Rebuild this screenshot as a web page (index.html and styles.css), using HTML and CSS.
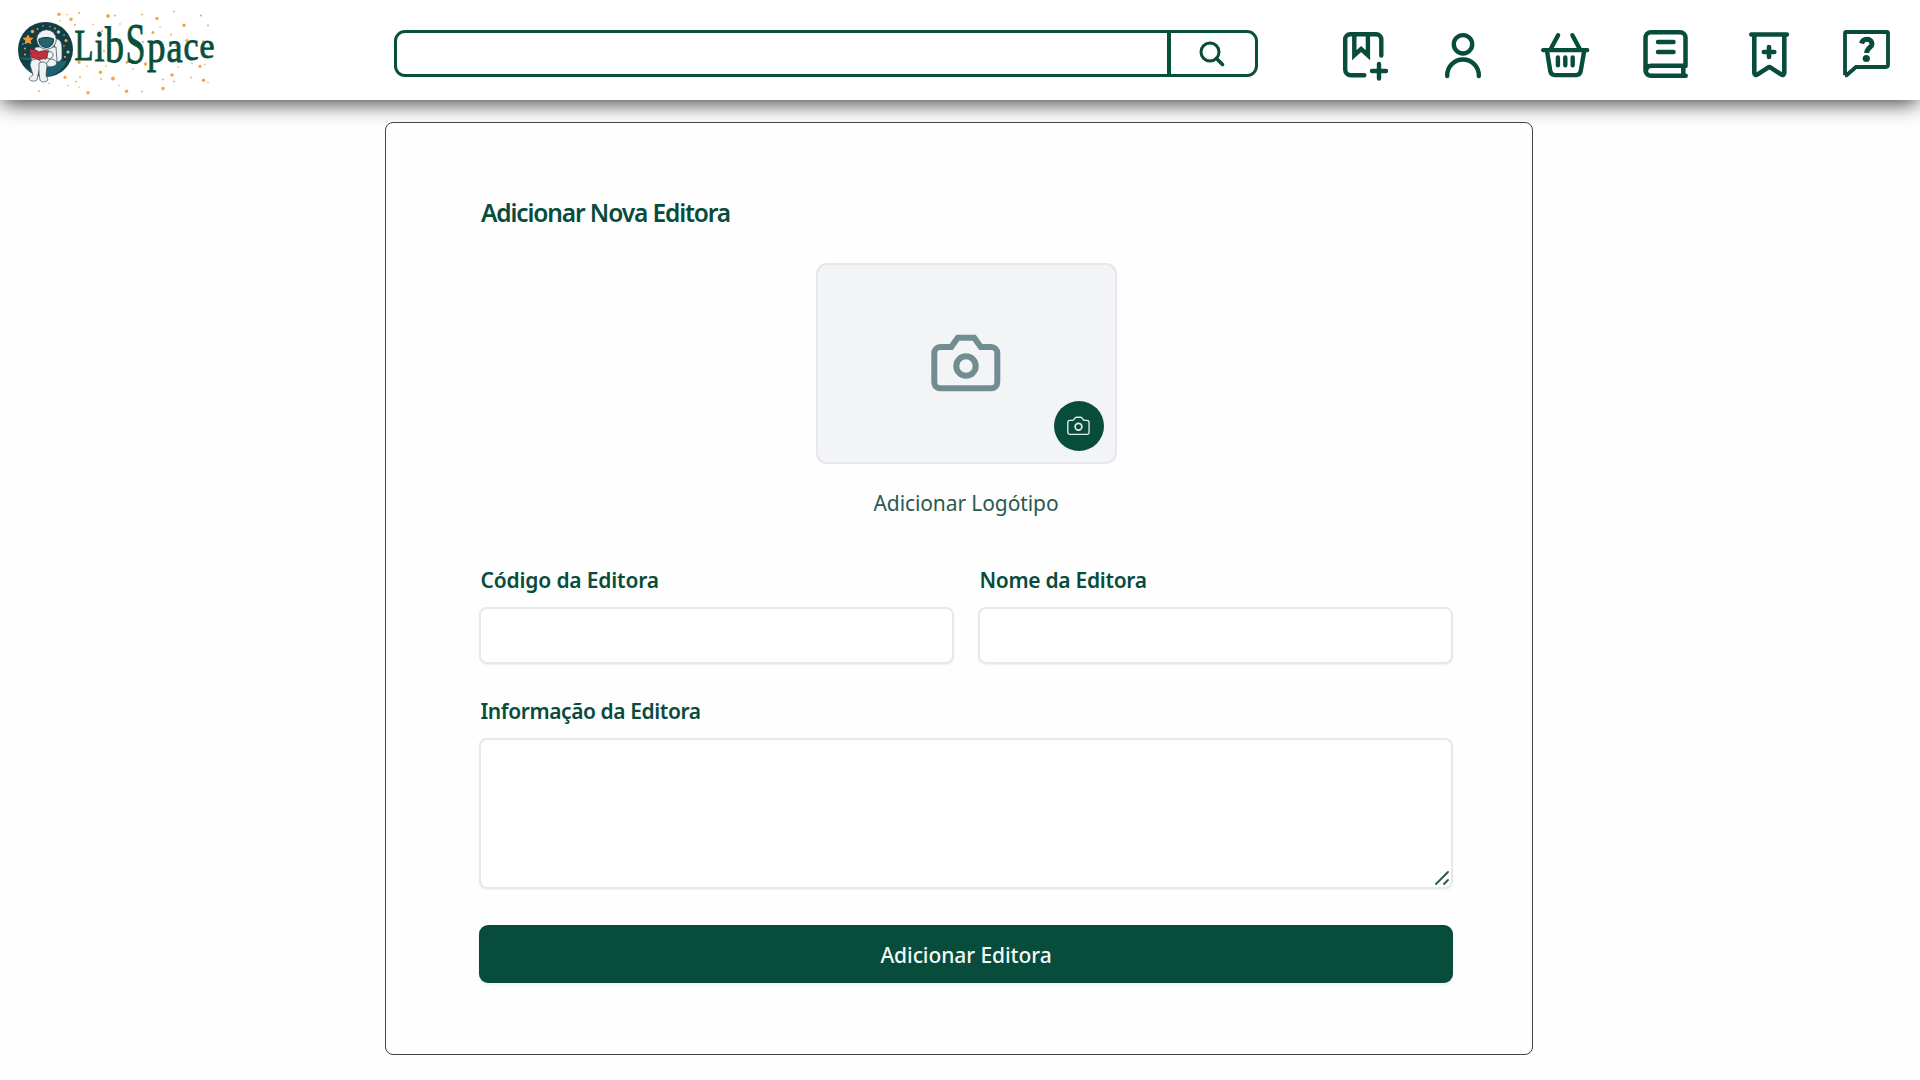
FILE: index.html
```html
<!DOCTYPE html>
<html lang="pt">
<head>
<meta charset="utf-8">
<title>LibSpace</title>
<link rel="stylesheet" href="styles.css">
</head>
<body>
<header class="topbar">
  <a class="logo">
    <svg width="240" height="100" viewBox="0 0 240 100">
      <g class="stars">
        <circle cx="59" cy="14.300" r="1.800"/><circle cx="67" cy="14.500" r=".8"/><circle cx="79" cy="13" r="1"/><circle cx="60" cy="20.700" r=".8"/><circle cx="71" cy="19.300" r="1.700"/><circle cx="75" cy="24.700" r="1"/>
        <circle cx="108" cy="16" r="1.900"/><circle cx="115" cy="15.500" r=".9"/><circle cx="142" cy="14.500" r=".9"/><circle cx="157" cy="18.500" r="1.700"/><circle cx="174" cy="11.500" r=".9"/><circle cx="201" cy="15.500" r="1"/>
        <circle cx="184" cy="25.300" r="1.800"/><circle cx="208" cy="25.500" r="1"/><circle cx="171" cy="34.500" r="1"/><circle cx="153" cy="32.500" r="1.500"/><circle cx="120" cy="24" r=".8"/><circle cx="93" cy="24.500" r=".8"/><circle cx="160" cy="27" r=".8"/>
        <circle cx="102" cy="31" r="1"/><circle cx="120" cy="40" r="1.500"/><circle cx="143" cy="42" r="1"/><circle cx="187" cy="40.500" r="1.600"/><circle cx="203" cy="41" r="1"/><circle cx="176" cy="46" r="1"/><circle cx="160" cy="57" r="1"/><circle cx="104" cy="51" r="1"/>
        <circle cx="79" cy="62.300" r="1.600"/><circle cx="87" cy="66.300" r=".8"/><circle cx="100.500" cy="72.300" r="1.800"/><circle cx="106" cy="66" r=".8"/><circle cx="127" cy="62.300" r="1.500"/><circle cx="145.500" cy="64" r="1.700"/><circle cx="133" cy="69" r=".8"/>
        <circle cx="65" cy="77.300" r="1.600"/><circle cx="80" cy="77" r=".9"/><circle cx="76" cy="81.500" r=".9"/><circle cx="68" cy="85.500" r=".8"/><circle cx="79" cy="87" r=".8"/><circle cx="88" cy="92.700" r="1.700"/><circle cx="39" cy="91" r=".9"/><circle cx="49" cy="83.500" r=".8"/>
        <circle cx="113" cy="78.500" r="1.900"/><circle cx="101" cy="79" r=".9"/><circle cx="119" cy="85.500" r=".8"/><circle cx="126.500" cy="91.300" r="1.800"/><circle cx="142" cy="91.500" r=".9"/><circle cx="163" cy="88.500" r="1.800"/><circle cx="163" cy="79.500" r=".9"/><circle cx="174" cy="81.500" r=".9"/>
        <circle cx="172" cy="75" r="1.800"/><circle cx="203.500" cy="80.300" r="1.800"/><circle cx="208" cy="82.500" r=".8"/><circle cx="191" cy="77.500" r=".9"/><circle cx="200" cy="66.300" r="1.600"/><circle cx="192" cy="63.500" r=".8"/><circle cx="205" cy="64.500" r=".8"/><circle cx="178" cy="67" r=".8"/>
      </g>
      <circle cx="45.500" cy="49.500" r="27.500" fill="#123f43"/>
      <path d="M19 57c12 1 42 4 48 4-4 9-12 15-22 16-10 0-22-7-26-20z" fill="#1c6170"/>
      <path d="M19 57c4 3 6 3 11 3v10c-6-3-9-7-11-13z" fill="#123f43"/>
      <path d="M28 35l1.300 3 3.400.3-2.600 2.200.8 3.300-2.900-1.800-2.900 1.800.8-3.300-2.600-2.200 3.400-.3z" fill="#f59b36" stroke="#f59b36"/>
      <g fill="#f4a340"><circle cx="32.500" cy="31.500" r="1.700"/><circle cx="37.500" cy="29" r=".9"/><circle cx="55" cy="28.500" r=".9"/><circle cx="66" cy="40.500" r="1.600"/><circle cx="25" cy="48.500" r="1"/><circle cx="25" cy="54.500" r="1"/><circle cx="64" cy="46" r=".8"/><circle cx="65" cy="57" r="1"/></g>
      <g fill="#9fd0d2"><circle cx="58.500" cy="32" r="1.800"/><circle cx="43" cy="26" r=".7"/><circle cx="50" cy="26.500" r=".7"/><circle cx="64" cy="35" r=".8"/><circle cx="68" cy="52" r="1.600"/><circle cx="23" cy="44" r=".7"/></g>
      <g fill="#eef2f3" stroke="#29454d" stroke-width=".7" stroke-linejoin="round">
        <path d="M55 39c5-1 7 4 7 9v10c-1 4-6 5-9 3z"/>
        <path d="M36 47h20l1 14-7 6H34l-4-12z"/>
        <path d="M50 59c5 0 8 3 6 6-4 3-9 2-10-1z"/>
        <path d="M31 61c4-3 10-2 10 2l-3 12-1 5c-3 2-7 1-8-1 0-2 3-3 4-4l-3-10z"/>
        <path d="M39 63c4-2 8-1 8 3l-1 9 2 5c-2 2-7 3-8 0l-1-6z"/>
        <circle cx="46.500" cy="39.500" r="9.800"/>
      </g>
      <path d="M39 39c4-2 10-2 14.500 0 .5 5-3 8.500-7.300 8.500s-8-3.500-7.200-8.500z" fill="#23666f" stroke="#17343c"/>
      <path d="M29 49c4 0 8 1 10 3 3-1.500 6-1.500 10-1l-3 8c-3-.5-5 0-7 1-2-2-4-2-7-2z" fill="#c22f3a" stroke="#6f1c28" stroke-width=".8"/>
      <path d="M48 52c3-1 5 0 5 3s-4 5-6 3z" fill="#eef2f3" stroke="#29454d" stroke-width=".7"/>
      <text class="wordmark"><tspan x="74.500" y="60" font-size="45" textLength="19" lengthAdjust="spacingAndGlyphs">L</tspan><tspan x="94.500" y="61" font-size="44" textLength="10" lengthAdjust="spacingAndGlyphs">i</tspan><tspan x="105" y="62" font-size="50" textLength="19" lengthAdjust="spacingAndGlyphs">b</tspan><tspan x="125.500" y="63" font-size="58" textLength="20" lengthAdjust="spacingAndGlyphs">S</tspan><tspan x="147" y="61.500" font-size="47" textLength="18.500" lengthAdjust="spacingAndGlyphs">p</tspan><tspan x="166.500" y="61.500" font-size="45" textLength="16" lengthAdjust="spacingAndGlyphs">a</tspan><tspan x="183.500" y="59.500" font-size="41" textLength="15" lengthAdjust="spacingAndGlyphs">c</tspan><tspan x="199.500" y="57.500" font-size="36" textLength="15" lengthAdjust="spacingAndGlyphs">e</tspan></text>
    </svg>
  </a>
  <div class="search">
    <input class="search-input" type="text" aria-label="Pesquisar">
    <button class="search-button" aria-label="Pesquisar">
      <svg width="28" height="28" viewBox="0 0 28 28" fill="none" stroke="currentColor" stroke-width="3"><circle cx="12" cy="12" r="9"/><path d="M18.500 18.500l6 6" stroke-width="3.600" stroke-linecap="round"/></svg>
    </button>
  </div>
  <nav class="actions">
    <svg viewBox="0 0 60 60"><path d="M29.300 53.300H16a5.800 5.800 0 0 1-5.800-5.800V17.300a5 5 0 0 1 5-5h26.100a5 5 0 0 1 5 5v16.200"/><path d="M19.300 13v20.200l6.800-6.200 6.800 6.200V13" stroke-linejoin="miter"/><path d="M44 42v14.500M37 49h14"/></svg>
    <svg viewBox="0 0 60 60"><circle cx="28" cy="22.300" r="9.200"/><path d="M12.200 54v-.7a15.800 15.800 0 0 1 31.600 0v.7"/></svg>
    <svg viewBox="0 0 60 60"><path d="M8.200 28.100h44M23.100 13.300l-7.500 14M37.400 13.300l7.500 14M12 29l3.300 20.200a4.700 4.700 0 0 0 4.600 3.900h21.200a4.700 4.700 0 0 0 4.600-3.900L49.200 29M22.900 35.500v7.700M30.300 35.500v7.700M37.700 35.500v7.700"/></svg>
    <svg viewBox="0 0 60 60"><path d="M50.500 44V15.800a5.500 5.500 0 0 0-5.500-5.500H16a5.500 5.500 0 0 0-5.500 5.500v32.500a5.400 5.400 0 0 0 5.400 5.500h34.800M11 49.200c0-3.500 2-5.400 5.500-5.400h34M48.300 44v9.800M23 20.100h15.500M23 30h15.500" stroke-width="4.500"/></svg>
    <svg viewBox="0 0 60 60"><path d="M16.300 12.500h35.600M19.300 13v37.500c0 2.600 1.500 3 3.300 1.800l10.400-6.700c1-.6 1.700-.6 2.600 0L46 52.300c1.800 1.200 3.300.8 3.300-1.800V13M34 25v10M28.800 30h10.500" stroke-width="4.600"/></svg>
    <svg viewBox="0 0 60 60"><path d="M10 53.200V11.300q0-1.300 1.300-1.300h40.400q1.300 0 1.300 1.300v31.500q0 2.200-2.200 2.200H21l-9.500 8.300H10" stroke-width="3.800" stroke-linejoin="miter" stroke-linecap="butt"/><path d="M26.500 21.500c.8-3 2.900-4.300 5.500-4.300 3 0 5 1.900 5 4.700 0 3.800-5.300 4-5.300 9" stroke-width="5" stroke-linecap="butt"/><circle cx="31.300" cy="36.500" r="3.600" fill="currentColor" stroke="none"/></svg>
  </nav>
</header>
<main class="card">
  <h1 class="title">Adicionar Nova Editora</h1>
  <div class="upload">
    <div class="preview">
      <svg width="80" height="72" viewBox="0 0 80 72" fill="none" stroke="currentColor" stroke-width="6"><path d="M14.300 19h10.900l6.600-9.300h16.400l6.600 9.300h10.500a6 6 0 0 1 6 6v29.300a6 6 0 0 1-6 6h-51a6 6 0 0 1-6-6V25a6 6 0 0 1 6-6z"/><circle cx="40" cy="38" r="9.700"/></svg>
      <button class="pick" aria-label="Escolher imagem"><svg width="27" height="23.600" viewBox="0 0 80 70" fill="none" stroke="currentColor" stroke-width="4"><path d="M14.300 19h8c5 0 5-9.300 12-9.300h11.400c7 0 7 9.300 12 9.300h7.600a6 6 0 0 1 6 6v29.300a6 6 0 0 1-6 6h-51a6 6 0 0 1-6-6V25a6 6 0 0 1 6-6z"/><circle cx="40" cy="38" r="10" stroke-width="5"/></svg></button>
    </div>
    <p class="hint">Adicionar Logótipo</p>
  </div>
  <form class="form">
    <div class="pair">
      <label class="field"><span class="label">Código da Editora</span><input class="control" type="text"></label>
      <label class="field"><span class="label name">Nome da Editora</span><input class="control" type="text"></label>
    </div>
    <label class="field info"><span class="label about">Informação da Editora</span>
      <span class="area-wrap"><textarea class="control area"></textarea><svg class="grip" width="18" height="18" viewBox="0 0 18 18" stroke="#31554f" stroke-width="1.900" stroke-linecap="round"><path d="M2 15L14 3M10 15l4-4"/></svg></span>
    </label>
    <button class="submit" type="button">Adicionar Editora</button>
  </form>
</main>
</body>
</html>
```
FILE: styles.css
```css
* { box-sizing: border-box; }
body {
  margin: 0;
  height: 1080px;
  overflow: hidden;
  background: #fefefe;
  color: #084c3b;
  font-family: "Noto Sans", "Open Sans", sans-serif;
}
input, textarea, button { font: inherit; color: inherit; margin: 0; padding: 0; }
svg { display: block; }

.topbar {
  display: flex;
  height: 100px;
  background: #fff;
  box-shadow: 0 5px 20px -2px rgba(0, 0, 0, .78);
}
.logo { width: 394px; }
.stars { fill: #f7a54a; }
.wordmark {
  font-family: "Liberation Serif", serif;
  fill: #07503c;
  stroke: #07503c;
  stroke-width: .9;
}
.search {
  display: flex;
  width: 864px;
  height: 47px;
  margin-top: 30px;
  border: 3px solid #07503c;
  border-radius: 11px;
}
.search-input { flex: 1; min-width: 0; border: 0; outline: 0; background: none; }
.search-button {
  display: grid;
  place-items: center;
  width: 88px;
  padding-right: 3px;
  border: 0;
  border-left: 4px solid #07503c;
  background: none;
}
.actions {
  display: grid;
  grid-template-columns: repeat(6, 100px);
  justify-items: center;
  margin: 22px 0 0 57px;
  height: 60px;
}
.actions svg {
  width: 60px;
  height: 60px;
  fill: none;
  stroke: currentColor;
  stroke-width: 4.400;
  stroke-linecap: round;
  stroke-linejoin: round;
}

.card {
  width: 1148px;
  height: 933px;
  margin: 22px 0 0 385px;
  padding: 72px 79px 0 93px;
  border: 1px solid #444;
  border-radius: 8px;
  background: #fefefe;
}
.title {
  margin: 0 0 0 2px;
  font-size: 24.500px;
  font-weight: 600;
  line-height: 36px;
  letter-spacing: -1.120px;
  white-space: nowrap;
}
.upload { display: flex; flex-direction: column; align-items: center; margin-top: 32px; }
.preview {
  position: relative;
  display: grid;
  place-items: center;
  width: 301px;
  height: 201px;
  border: 2px solid #e5e7eb;
  border-radius: 11px;
  background: #f3f4f6;
  color: #728d91;
}
.pick {
  position: absolute;
  right: 11px;
  bottom: 11px;
  display: grid;
  place-items: center;
  width: 50px;
  height: 50px;
  border: 0;
  border-radius: 50%;
  background: #084c3b;
  color: #e5efec;
}
.hint { margin: 23px 0 0; font-size: 21px; line-height: 32px; letter-spacing: -.1px; color: #2b5953; }
.form { display: flex; flex-direction: column; margin-top: 45px; }
.pair { display: grid; grid-template-columns: 1fr 1fr; gap: 24px; }
.field { display: block; }
.label {
  display: block;
  margin: 0 0 11px 1.500px;
  font-size: 21px;
  font-weight: 600;
  line-height: 32px;
  letter-spacing: -.160px;
  white-space: nowrap;
}
.name { letter-spacing: -.300px; }
.about { letter-spacing: -.420px; }
.control {
  display: block;
  width: 100%;
  height: 57px;
  border: 2px solid #e7e7ec;
  border-radius: 8px;
  outline: 0;
  background: #fff;
  box-shadow: 0 1px 2px rgba(0, 0, 0, .06);
}
.info { margin-top: 31px; }
.area-wrap { position: relative; display: block; }
.area { height: 151px; resize: none; }
.grip { position: absolute; right: 1px; bottom: 2px; }
.submit {
  height: 58px;
  margin-top: 36px;
  padding-top: 1px;
  border: 0;
  border-radius: 9px;
  background: #084c3b;
  color: #f4f8f6;
  font-size: 21px;
  font-weight: 500;
  letter-spacing: -.080px;
  box-shadow: 0 2px 3px rgba(0, 0, 0, .06);
}
```
